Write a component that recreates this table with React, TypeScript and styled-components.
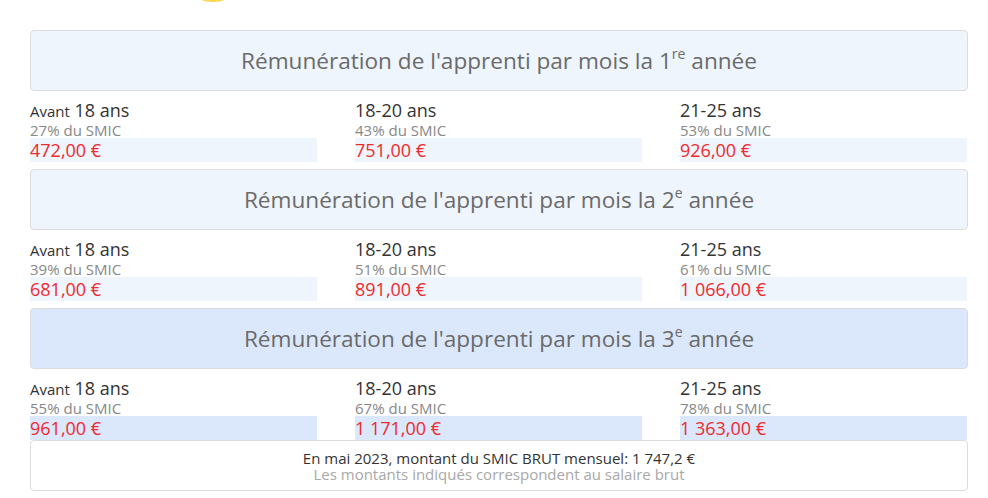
import React from 'react';
import styled, { createGlobalStyle } from 'styled-components';

const GlobalStyle = createGlobalStyle`
  html, body {
    margin: 0;
    padding: 0;
    background: #ffffff;
    overflow: hidden;
  }
  body {
    font-family: 'Open Sans', 'Liberation Sans', sans-serif;
    color: #333333;
  }
`;

const Page = styled.div`
  width: 988px;
  height: 498px;
  box-sizing: border-box;
  padding: 0 20px 0 30px;
`;

const TopStrip = styled.div`
  height: 30px;
  display: flex;
  align-items: flex-start;
  padding-left: 164px;
`;

const Wrapper = styled.div`
  width: 938px;
`;

const Section = styled.section`
  margin-bottom: 7px;

  &:last-of-type {
    margin-bottom: 0;
  }
`;

const Header = styled.div<{ $strong?: boolean }>`
  height: 59px;
  border: 1px solid #dcdcdc;
  border-radius: 4px;
  background: ${({ $strong }) => ($strong ? '#dbe8fb' : '#eff5fd')};
  display: flex;
  align-items: center;
  justify-content: center;
  font-size: 22.6px;
  line-height: 30px;
  color: #6a6a6a;
`;

const Sup = styled.sup`
  font-size: 14px;
  line-height: 0;
  position: relative;
  top: -1px;
`;

const Grid = styled.div`
  display: grid;
  grid-template-columns: repeat(3, 287px);
  column-gap: 38px;
  padding-top: 7px;
`;

const Cell = styled.div`
  display: flex;
  flex-direction: column;
`;

const Age = styled.div`
  font-size: 18px;
  line-height: 24px;
  height: 24px;
  color: #333333;
`;

const Small = styled.span`
  font-size: 15px;
  line-height: 1;
`;

const Percent = styled.div`
  font-size: 15px;
  line-height: 16px;
  height: 16px;
  color: #888888;
`;

const Amount = styled.div<{ $strong?: boolean }>`
  font-size: 18px;
  line-height: 24px;
  height: 24px;
  color: #ee2a2d;
  background: ${({ $strong }) => ($strong ? '#dbe8fb' : '#eff5fd')};
`;

const Footer = styled.div`
  height: 49px;
  box-sizing: content-box;
  border: 1px solid #dcdcdc;
  border-radius: 4px;
  background: #ffffff;
  display: flex;
  flex-direction: column;
  justify-content: center;
  text-align: center;
  font-size: 15px;
  line-height: 16px;
`;

const FooterMain = styled.div`
  color: #333333;
`;

const FooterNote = styled.div`
  color: #a8a8a8;
`;

type Column = { label: React.ReactNode; pct: string; amount: string };

const years: { sup: string; strong?: boolean; cols: Column[] }[] = [
  {
    sup: 're',
    cols: [
      { label: <><Small>Avant</Small> 18 ans</>, pct: '27% du SMIC', amount: '472,00 €' },
      { label: '18-20 ans', pct: '43% du SMIC', amount: '751,00 €' },
      { label: '21-25 ans', pct: '53% du SMIC', amount: '926,00 €' },
    ],
  },
  {
    sup: 'e',
    cols: [
      { label: <><Small>Avant</Small> 18 ans</>, pct: '39% du SMIC', amount: '681,00 €' },
      { label: '18-20 ans', pct: '51% du SMIC', amount: '891,00 €' },
      { label: '21-25 ans', pct: '61% du SMIC', amount: '1 066,00 €' },
    ],
  },
  {
    sup: 'e',
    strong: true,
    cols: [
      { label: <><Small>Avant</Small> 18 ans</>, pct: '55% du SMIC', amount: '961,00 €' },
      { label: '18-20 ans', pct: '67% du SMIC', amount: '1 171,00 €' },
      { label: '21-25 ans', pct: '78% du SMIC', amount: '1 363,00 €' },
    ],
  },
];

export default function App() {
  return (
    <>
      <GlobalStyle />
      <Page>
        <TopStrip>
          <svg width="38" height="3" viewBox="0 0 38 3">
            <ellipse cx="19" cy="-6" rx="18" ry="8" fill="#f9d64a" />
          </svg>
        </TopStrip>
        <Wrapper>
          {years.map((y, i) => (
            <Section key={i}>
              <Header $strong={y.strong}>
                <span>
                  Rémunération de l'apprenti par mois la {i + 1}
                  <Sup>{y.sup}</Sup> année
                </span>
              </Header>
              <Grid>
                {y.cols.map((c, j) => (
                  <Cell key={j}>
                    <Age>{c.label}</Age>
                    <Percent>{c.pct}</Percent>
                    <Amount $strong={y.strong}>{c.amount}</Amount>
                  </Cell>
                ))}
              </Grid>
            </Section>
          ))}
          <Footer>
            <FooterMain>En mai 2023, montant du SMIC BRUT mensuel: 1 747,2 €</FooterMain>
            <FooterNote>Les montants indiqués correspondent au salaire brut</FooterNote>
          </Footer>
        </Wrapper>
      </Page>
    </>
  );
}
